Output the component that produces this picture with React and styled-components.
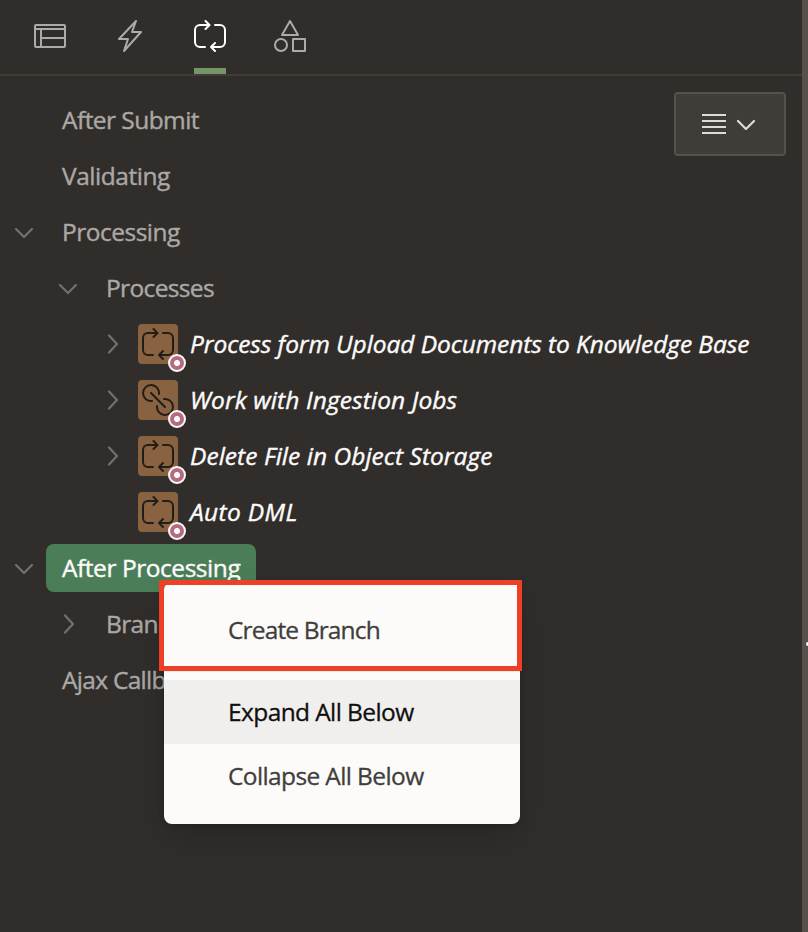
import React from "react";
import styled, { createGlobalStyle } from "styled-components";

const Global = createGlobalStyle`
  * { box-sizing: border-box; }
  html, body { margin: 0; background: #312d2a; }
  body { overflow: hidden; font-family: "Open Sans", "Noto Sans", sans-serif; font-size: 24.5px; }
`;

const Page = styled.div`
  position: relative;
  display: flex;
  width: 808px;
  height: 932px;
  overflow: hidden;
  background: #312d2a;
`;

const Panel = styled.div`
  position: relative;
  flex: 1;
  display: flex;
  flex-direction: column;
`;

const Splitter = styled.div`
  width: 6px;
  display: flex;
  align-items: flex-end;
  justify-content: flex-end;
  background: #57514c;
`;

const SplitterHandle = styled.i`
  width: 2px;
  height: 4px;
  margin-bottom: 286px;
  border-radius: 2px 0 0 2px;
  background: #fcfbfa;
`;

const Tabs = styled.nav`
  height: 76px;
  display: flex;
  gap: 48px;
  padding-left: 34px;
  border-bottom: 2px solid #403c38;
`;

const Tab = styled.div`
  width: 32px;
  padding-top: 20px;
  color: ${(p) => (p.$active ? "#ffffff" : "#acabaa")};
  border-bottom: 6px solid ${(p) => (p.$active ? "#759467" : "transparent")};
`;

const Icon = styled.svg`
  display: block;
  flex: none;
  fill: none;
  stroke: currentColor;
  stroke-width: ${(p) => p.$weight || 2};
  stroke-linecap: ${(p) => p.$cap || "round"};
  stroke-linejoin: round;
`;

const ViewButton = styled.button`
  position: absolute;
  top: 92px;
  right: 16px;
  width: 112px;
  height: 64px;
  padding: 0 0 0 26px;
  display: flex;
  align-items: center;
  gap: 10px;
  color: #dddcda;
  background: #403c38;
  border: 2px solid #55514d;
  border-radius: 4px;
`;

const Tree = styled.div`
  padding-top: 16px;
  display: flex;
  flex-direction: column;
`;

const Row = styled.div`
  height: 56px;
  padding-left: ${(p) => p.$level * 44}px;
  display: flex;
  align-items: center;
`;

const Toggle = styled.span`
  width: ${(p) => (p.$narrow ? 50 : 46)}px;
  padding-left: ${(p) => (p.$right ? 19 : 14)}px;
  flex: none;
  color: #73706d;
`;

const Label = styled.span`
  height: 48px;
  padding: 0 ${(p) => (p.$item ? 0 : 16)}px;
  margin-left: ${(p) => (p.$item ? 12 : 0)}px;
  width: ${(p) => (p.$selected ? "210px" : "auto")};
  line-height: 48px;
  white-space: nowrap;
  border-radius: 8px;
  font-style: ${(p) => (p.$item ? "italic" : "normal")};
  -webkit-text-stroke: 0.4px currentColor;
  color: ${(p) => (p.$item || p.$selected ? "#fcfbfa" : "#aaa8a6")};
  background: ${(p) => (p.$selected ? "#4b7e58" : "transparent")};
  letter-spacing: ${(p) => p.$track}px;
`;

const Tile = styled.span`
  position: relative;
  width: 40px;
  height: 40px;
  flex: none;
  display: flex;
  align-items: center;
  justify-content: center;
  color: #231d18;
  background: #896341;
  border-radius: 4px;
`;

const Badge = styled.i`
  position: absolute;
  left: 30px;
  top: 30px;
  width: 18px;
  height: 18px;
  border: 2px solid #fcfbfa;
  border-radius: 50%;
  background: radial-gradient(circle, #fcfbfa 0 2.6px, #b56b80 3.4px);
`;

const Menu = styled.div`
  position: absolute;
  left: 164px;
  top: 582px;
  width: 356px;
  height: 242px;
  padding: 16px 0;
  border-radius: 8px;
  background: #fcfbfa;
  box-shadow: 0 12px 36px -4px rgba(0, 0, 0, 0.2), 0 2px 6px rgba(0, 0, 0, 0.15);
`;

const MenuItem = styled.div`
  height: 64px;
  padding-left: 64px;
  line-height: 64px;
  white-space: nowrap;
  -webkit-text-stroke: 0.3px currentColor;
  color: ${(p) => (p.$active ? "#100f0e" : "#403e3c")};
  background: ${(p) => (p.$active ? "#f0efee" : "transparent")};
  letter-spacing: ${(p) => p.$track}px;
`;

const Divider = styled.div`
  height: 2px;
  margin: 8px 0;
  background: #ecebea;
`;

const Highlight = styled.div`
  position: absolute;
  left: 159px;
  top: 580px;
  width: 363px;
  height: 91px;
  border: 5px solid #ed4026;
`;

const Loop = () => (
  <Icon width="32" height="32" viewBox="0 0 32 32">
    <path d="M11 27H6a5 5 0 0 1-5-5V10a5 5 0 0 1 5-5h9M11.5 1l4 4-4 4M21 5h5a5 5 0 0 1 5 5v12a5 5 0 0 1-5 5h-9M21 23l-4 4 4 4" />
  </Icon>
);

const Link = () => (
  <Icon width="32" height="32" viewBox="0 0 32 32">
    <path d="M9 9l14 14M10 17a8 8 0 1 1 7-7M22 15a8 8 0 1 1-7 7" />
  </Icon>
);

const LayoutIcon = () => (
  <Icon width="32" height="32" viewBox="0 0 32 32">
    <path d="M2 5h28a1 1 0 0 1 1 1v20a1 1 0 0 1-1 1H2a1 1 0 0 1-1-1V6a1 1 0 0 1 1-1zM1 9h30M7 9v18M7 18h24" />
  </Icon>
);

const Bolt = () => (
  <Icon width="32" height="32" viewBox="0 0 32 32">
    <path d="M18 1L1 19h9L6 31 23 12h-9z" transform="translate(4 0)" />
  </Icon>
);

const Shapes = () => (
  <Icon width="32" height="32" viewBox="0 0 32 32">
    <path d="M16 1l8 14H8zM19 19h12v12H19z" />
    <circle cx="7" cy="25" r="6" />
  </Icon>
);

const Down = () => (
  <Icon width="20" height="14" viewBox="0 0 20 14" $weight={2.2}>
    <path d="M2 4l8 8 8-8" />
  </Icon>
);

const Right = () => (
  <Icon width="12" height="20" viewBox="0 0 12 20" $weight={2.2}>
    <path d="M2 1.5l8 8.5-8 8.5" />
  </Icon>
);

const rows = [
  { text: "After Submit", level: 0, track: -0.55 },
  { text: "Validating", level: 0, track: -0.45 },
  { text: "Processing", level: 0, toggle: "down", track: -0.5 },
  { text: "Processes", level: 1, toggle: "down", track: -0.65 },
  { text: "Process form Upload Documents to Knowledge Base", level: 2, toggle: "right", icon: "loop", track: -0.07 },
  { text: "Work with Ingestion Jobs", level: 2, toggle: "right", icon: "link", track: 0.1 },
  { text: "Delete File in Object Storage", level: 2, toggle: "right", icon: "loop", track: 0.04 },
  { text: "Auto DML", level: 2, icon: "loop", track: 0.35 },
  { text: "After Processing", level: 0, toggle: "down", selected: true, track: -0.45 },
  { text: "Branches", level: 1, toggle: "right", track: -0.65 },
  { text: "Ajax Callback", level: 0, track: -0.7 },
];

export default function App() {
  return (
    <Page>
      <Global />
      <Panel>
        <Tabs>
          <Tab><LayoutIcon /></Tab>
          <Tab><Bolt /></Tab>
          <Tab $active><Loop /></Tab>
          <Tab><Shapes /></Tab>
        </Tabs>
        <Tree>
          {rows.map((r) => (
            <Row key={r.text} $level={r.level}>
              <Toggle $narrow={!!r.icon} $right={r.toggle === "right"}>
                {r.toggle === "down" && <Down />}
                {r.toggle === "right" && <Right />}
              </Toggle>
              {r.icon && (
                <Tile>
                  {r.icon === "loop" ? <Loop /> : <Link />}
                  <Badge />
                </Tile>
              )}
              <Label $item={!!r.icon} $selected={r.selected} $track={r.track}>{r.text}</Label>
            </Row>
          ))}
        </Tree>
        <ViewButton aria-label="View options">
          <Icon width="24" height="20" viewBox="0 0 24 20" $cap="butt">
            <path d="M0 1h24M0 7h24M0 13h24M0 19h24" />
          </Icon>
          <Down />
        </ViewButton>
      </Panel>
      <Splitter><SplitterHandle /></Splitter>
      <Menu>
        <MenuItem $track={-0.85}>Create Branch</MenuItem>
        <Divider />
        <MenuItem $active $track={-0.6}>Expand All Below</MenuItem>
        <MenuItem $track={-0.62}>Collapse All Below</MenuItem>
      </Menu>
      <Highlight />
    </Page>
  );
}
